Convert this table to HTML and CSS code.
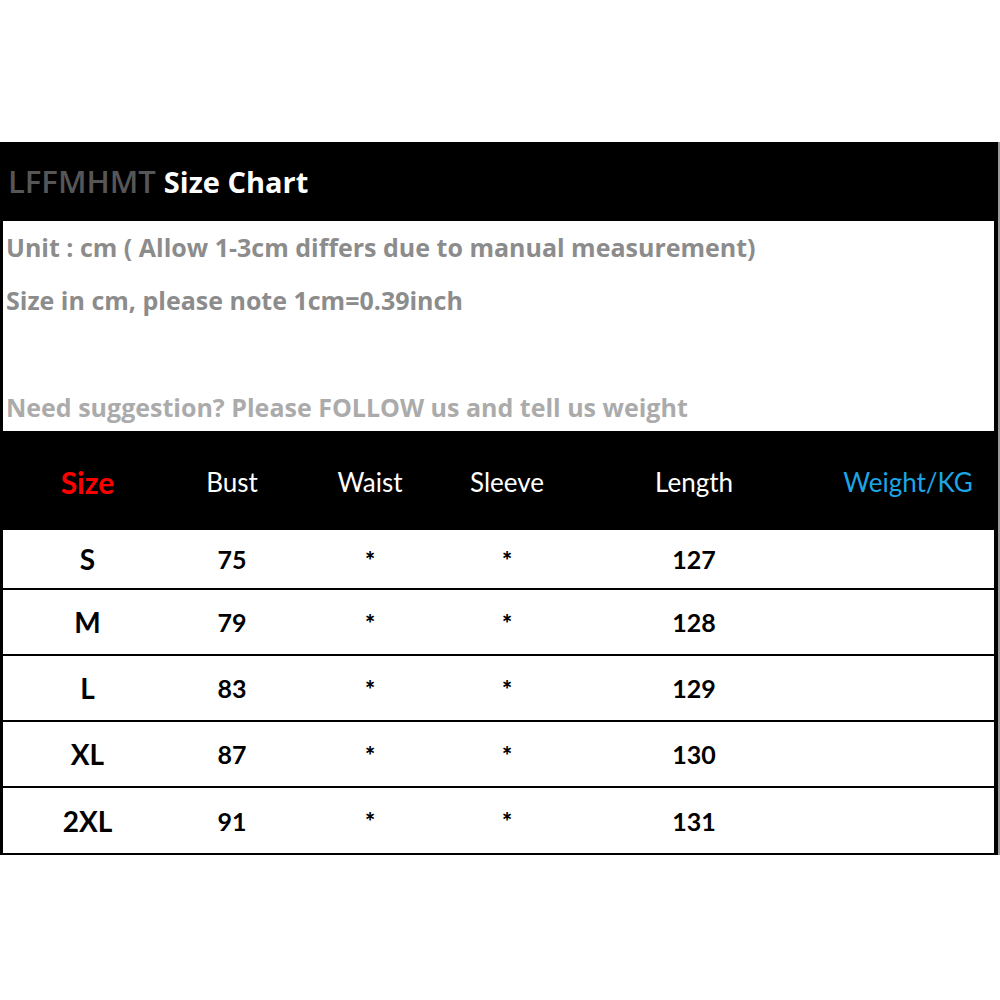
FILE: index.html
```html
<!DOCTYPE html>
<html>
<head>
<meta charset="utf-8">
<link rel="stylesheet" href="styles.css">
</head>
<body>
<div class="chart">
  <div class="title"><span class="brand">LFFMHMT</span> <span class="title-main">Size Chart</span></div>
  <div class="info">
    <div class="line l1">Unit : cm ( Allow 1-3cm differs due to manual measurement)</div>
    <div class="line l2">Size in cm, please note 1cm=0.39inch</div>
    <div class="line l3">Need suggestion? Please FOLLOW us and tell us weight</div>
  </div>
  <div class="thead">
    <div class="c h-size">Size</div>
    <div class="c">Bust</div>
    <div class="c">Waist</div>
    <div class="c">Sleeve</div>
    <div class="c">Length</div>
    <div class="c h-weight">Weight/KG</div>
  </div>
  <div class="rows">
    <div class="row first"><div class="c size">S</div><div class="c">75</div><div class="c star">*</div><div class="c star">*</div><div class="c">127</div><div class="c"></div></div>
    <div class="row"><div class="c size">M</div><div class="c">79</div><div class="c star">*</div><div class="c star">*</div><div class="c">128</div><div class="c"></div></div>
    <div class="row"><div class="c size">L</div><div class="c">83</div><div class="c star">*</div><div class="c star">*</div><div class="c">129</div><div class="c"></div></div>
    <div class="row"><div class="c size">XL</div><div class="c">87</div><div class="c star">*</div><div class="c star">*</div><div class="c">130</div><div class="c"></div></div>
    <div class="row last"><div class="c size">2XL</div><div class="c">91</div><div class="c star">*</div><div class="c star">*</div><div class="c">131</div><div class="c"></div></div>
  </div>
</div>
</body>
</html>
```
FILE: styles.css
```css
html, body {
  margin: 0;
  padding: 0;
  background: #fff;
}
body {
  font-family: "Lato", "Open Sans", sans-serif;
}
.chart {
  margin-top: 142px;
  width: 998px;
  background: #000;
  border-right: 2px solid #9a9a9a;
  padding-bottom: 2px;
}
.title {
  height: 78px;
  display: flex;
  align-items: center;
  padding-left: 8px;
  font-family: "Open Sans", sans-serif;
  font-size: 29px;
  color: #fff;
  gap: 8px;
}
.brand {
  color: #565656;
  font-weight: 600;
  font-size: 31px;
  letter-spacing: 0;
}
.title-main {
  font-weight: 700;
}
.info {
  background: #fff;
  margin: 1px 4px 0 3px;
  height: 210px;
  box-sizing: border-box;
  padding-left: 3px;
}
.line {
  font-family: "Open Sans", sans-serif;
  font-weight: 700;
  font-size: 25px;
  line-height: 30px;
  color: #8c8c8c;
}
.l1 { padding-top: 11px; }
.l2 { margin-top: 23px; }
.l3 { margin-top: 77px; color: #ababab; }
.thead,
.row {
  display: grid;
  grid-template-columns: 169px 120px 156px 118px 256px 172px;
  align-items: center;
}
.thead {
  height: 98px;
  box-sizing: border-box;
  padding-top: 4px;
  margin: 0 4px 0 3px;
  color: #fff;
  font-size: 26px;
  font-weight: 400;
}
.c {
  text-align: center;
}
.h-size {
  color: #ff0000;
  font-weight: 700;
  font-size: 30px;
}
.h-weight {
  color: #1ba6e6;
}
.rows {
  display: flex;
  flex-direction: column;
  gap: 2px;
  padding-top: 1px;
  margin: 0 4px 0 3px;
}
.row {
  background: #fff;
  height: 64px;
  font-size: 25px;
  font-weight: 700;
  color: #000;
}
.row.first { height: 58px; }
.row.last { height: 65px; }
.size {
  font-size: 28px;
}
.star {
  font-size: 24px;
  font-weight: 900;
  padding-top: 2px;
}
```
